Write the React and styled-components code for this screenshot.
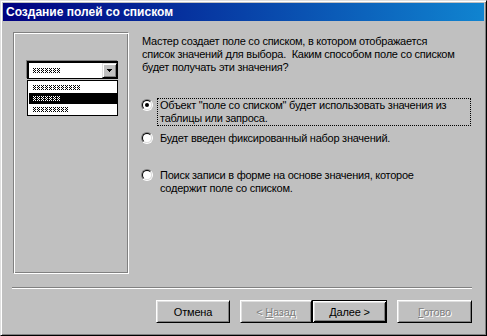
import React from 'react';
import styled, { createGlobalStyle } from 'styled-components';

const GlobalStyle = createGlobalStyle`
	html, body {
		margin: 0;
		padding: 0;
		background: #c0c0c0;
	}

	body {
		font-family: "Liberation Sans", Arial, sans-serif;
		font-size: 11px;
		color: #000;
	}
`;

const Window = styled.div`
	box-sizing: border-box;
	width: 487px;
	height: 336px;
	padding: 2px;
	display: flex;
	flex-direction: column;
	background: #c0c0c0;
	border: 1px solid;
	border-color: #dfdfdf #000 #000 #dfdfdf;
	box-shadow: inset 1px 1px #fff, inset -1px -1px #808080;
`;

const TitleBar = styled.div`
	height: 18px;
	padding-left: 3px;
	background: linear-gradient( to right, #000080, #1084d0 );
	color: #fff;
	font-weight: bold;
	font-size: 12px;
	line-height: 18px;
	white-space: nowrap;
`;

const Body = styled.div`
	flex: 1;
	display: flex;
	flex-direction: column;
	padding: 11px 12px 0 10px;
`;

const Main = styled.div`
	display: flex;
	height: 242px;
`;

const Frame = styled.div`
	box-sizing: border-box;
	width: 116px;
	height: 242px;
	padding: 28px 0 0 13px;
	border: 1px solid;
	border-color: #808080 #fff #fff #808080;
	box-shadow: inset 1px 1px #fff, inset -1px -1px #808080;
`;

const Combo = styled.div`
	box-sizing: border-box;
	width: 91px;
	height: 18px;
	display: flex;
	align-items: center;
	padding-left: 4px;
	background: #fff;
	border-style: solid;
	border-color: #000;
	border-width: 2px 1px 1px 2px;
	box-shadow: -1px -1px 0 #808080;
`;

const DropButton = styled.div`
	box-sizing: border-box;
	width: 15px;
	height: 15px;
	margin-left: auto;
	display: flex;
	align-items: center;
	justify-content: center;
	background: #c0c0c0;
	border: 1px solid;
	border-color: #dfdfdf #000 #000 #dfdfdf;
	box-shadow: inset 1px 1px #fff, inset -1px -1px #808080;
`;

const DropList = styled.div`
	box-sizing: border-box;
	width: 91px;
	height: 36px;
	margin-top: 1px;
	padding-top: 1px;
	background: #fff;
	border: 1px solid #000;
`;

const ListItem = styled.div`
	height: 11px;
	margin-left: 1px;
	padding-left: 4px;
	display: flex;
	align-items: center;
	background: ${ p => p.selected ? '#000' : 'transparent' };
`;

const Content = styled.div`
	flex: 1;
	margin-left: 12px;
	display: flex;
	flex-direction: column;
	letter-spacing: -0.25px;
`;

const Intro = styled.p`
	margin: 0;
	padding: 3px 0 0 1px;
	line-height: 13px;
	white-space: pre;
`;

const Options = styled.div`
	margin-top: 24px;
	display: flex;
	flex-direction: column;
`;

const Option = styled.div`
	display: flex;
	align-items: flex-start;
	margin-top: ${ p => p.gap || 0 }px;
`;

const RadioOuter = styled.span`
	box-sizing: border-box;
	flex-shrink: 0;
	width: 12px;
	height: 12px;
	margin-top: 1px;
	display: flex;
	border-radius: 50%;
	border: 1px solid;
	border-color: #808080 #fff #fff #808080;
`;

const RadioInner = styled.span`
	box-sizing: border-box;
	width: 10px;
	height: 10px;
	display: flex;
	align-items: center;
	justify-content: center;
	border-radius: 50%;
	background: #fff;
	border: 1px solid;
	border-color: #000 #dfdfdf #dfdfdf #000;
`;

const RadioDot = styled.span`
	width: 4px;
	height: 4px;
	border-radius: 50%;
	background: #000;
`;

const OptionLabel = styled.span`
	box-sizing: border-box;
	width: 314px;
	margin-left: 4px;
	padding: 0 2px;
	line-height: 13px;
	white-space: pre;
	border: 1px ${ p => p.focused ? 'dotted #000' : 'solid transparent' };
`;

const Separator = styled.div`
	margin: 13px 0 0 -1px;
	border-top: 1px solid #808080;
	border-bottom: 1px solid #fff;
`;

const ButtonRow = styled.div`
	margin-top: 11px;
	display: flex;
	justify-content: flex-end;
`;

const Button = styled.button`
	box-sizing: border-box;
	width: ${ p => p.width }px;
	height: 23px;
	margin: 0 0 0 ${ p => p.gap || 0 }px;
	padding: 0;
	background: #c0c0c0;
	font-family: "Liberation Sans", Arial, sans-serif;
	font-size: 11px;
	letter-spacing: -0.2px;
	color: ${ p => p.disabled ? '#808080' : '#000' };
	text-shadow: ${ p => p.disabled ? '1px 1px #fff' : 'none' };
	border: 1px solid;
	border-color: ${ p => p.primary ? '#000' : '#fff #000 #000 #fff' };
	box-shadow: ${ p => p.primary
		? 'inset 1px 1px #fff, inset -1px -1px #000, inset 2px 2px #dfdfdf, inset -2px -2px #808080'
		: 'inset 1px 1px #dfdfdf, inset -1px -1px #808080' };
	white-space: pre;
`;

const Squiggle = ( { width, color } ) => {
	const id = `sq-${ color.replace( '#', '' ) }-${ width }`;
	return (
		<svg width={ width } height="5" shapeRendering="crispEdges" style={ { display: 'block' } }>
			<defs>
				<pattern id={ id } width="4" height="5" patternUnits="userSpaceOnUse">
					<rect x="0" y="0" width="1" height="1" fill={ color } />
					<rect x="2" y="0" width="1" height="1" fill={ color } />
					<rect x="1" y="1" width="1" height="1" fill={ color } />
					<rect x="0" y="2" width="1" height="1" fill={ color } />
					<rect x="2" y="2" width="1" height="1" fill={ color } />
					<rect x="1" y="3" width="1" height="1" fill={ color } />
					<rect x="0" y="4" width="1" height="1" fill={ color } />
					<rect x="2" y="4" width="1" height="1" fill={ color } />
				</pattern>
			</defs>
			<rect width={ width } height="5" fill={ `url(#${ id })` } />
		</svg>
	);
};

const ArrowDown = () => (
	<svg width="5" height="3" shapeRendering="crispEdges" style={ { display: 'block' } }>
		<rect x="0" y="0" width="5" height="1" fill="#000" />
		<rect x="1" y="1" width="3" height="1" fill="#000" />
		<rect x="2" y="2" width="1" height="1" fill="#000" />
	</svg>
);

const Radio = ( { checked } ) => (
	<RadioOuter>
		<RadioInner>{ checked && <RadioDot /> }</RadioInner>
	</RadioOuter>
);

export default function App() {
	return (
		<>
			<GlobalStyle />
			<Window>
				<TitleBar>Создание полей со списком</TitleBar>
				<Body>
					<Main>
						<Frame>
							<Combo>
								<Squiggle width={ 28 } color="#000" />
								<DropButton><ArrowDown /></DropButton>
							</Combo>
							<DropList>
								<ListItem><Squiggle width={ 48 } color="#000" /></ListItem>
								<ListItem selected><Squiggle width={ 28 } color="#fff" /></ListItem>
								<ListItem><Squiggle width={ 36 } color="#000" /></ListItem>
							</DropList>
						</Frame>
						<Content>
							<Intro>
								{ 'Мастер создает поле со списком, в котором отображается\nсписок значений для выбора.  Каким способом поле со списком\nбудет получать эти значения?' }
							</Intro>
							<Options>
								<Option>
									<Radio checked />
									<OptionLabel focused>
										{ 'Объект "поле со списком" будет использовать значения из\nтаблицы или запроса.' }
									</OptionLabel>
								</Option>
								<Option gap={ 5 }>
									<Radio />
									<OptionLabel>Будет введен фиксированный набор значений.</OptionLabel>
								</Option>
								<Option gap={ 22 }>
									<Radio />
									<OptionLabel>
										{ 'Поиск записи в форме на основе значения, которое\nсодержит поле со списком.' }
									</OptionLabel>
								</Option>
							</Options>
						</Content>
					</Main>
					<Separator />
					<ButtonRow>
						<Button width={ 74 }>Отмена</Button>
						<Button width={ 72 } gap={ 10 } disabled>{ '< ' }<u>Н</u>азад</Button>
						<Button width={ 75 } primary><u>Д</u>алее &gt;</Button>
						<Button width={ 75 } gap={ 10 } disabled><u>Г</u>отово</Button>
					</ButtonRow>
				</Body>
			</Window>
		</>
	);
}
